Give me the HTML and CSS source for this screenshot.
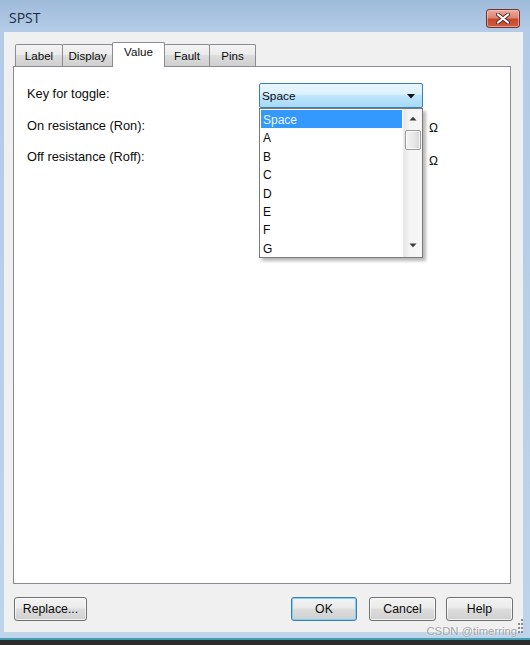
FILE: index.html
```html
<!DOCTYPE html>
<html>
<head>
<meta charset="utf-8">
<title>SPST</title>
<link rel="stylesheet" href="styles.css">
</head>
<body>
<div class="window">
  <div class="titlebar">
    <span class="title">SPST</span>
    <div class="close">
      <svg width="14" height="11" viewBox="0 0 14 11">
        <path d="M2 1.5 L12 9.5 M12 1.5 L2 9.5" stroke="#5a2a24" stroke-width="4" stroke-linecap="round"/>
        <path d="M2 1.5 L12 9.5 M12 1.5 L2 9.5" stroke="#ffffff" stroke-width="2.2" stroke-linecap="round"/>
      </svg>
    </div>
  </div>
  <div class="client">
    <div class="tabs">
      <div class="tab t-label">Label</div>
      <div class="tab t-display">Display</div>
      <div class="tab t-value active">Value</div>
      <div class="tab t-fault">Fault</div>
      <div class="tab t-pins">Pins</div>
    </div>
    <div class="panel">
      <div class="row r1">
        <div class="lbl">Key for toggle:</div>
        <div class="field">
          <div class="combo">
            <span class="combo-text">Space</span>
            <svg class="combo-arrow" width="8" height="5" viewBox="0 0 8 5"><path d="M0 0 H8 L4 4.5 Z" fill="#111"/></svg>
          </div>
          <div class="dropdown">
            <div class="items">
              <div class="item sel">Space</div>
              <div class="item">A</div>
              <div class="item">B</div>
              <div class="item">C</div>
              <div class="item">D</div>
              <div class="item">E</div>
              <div class="item">F</div>
              <div class="item">G</div>
            </div>
            <div class="scroll">
              <svg class="sarrow up" width="8" height="5" viewBox="0 0 8 5"><path d="M0.5 4.5 H7.5 L4 0.8 Z" fill="#3a3a3a"/></svg>
              <div class="thumb"></div>
              <svg class="sarrow down" width="8" height="5" viewBox="0 0 8 5"><path d="M0.5 0.5 H7.5 L4 4.2 Z" fill="#3a3a3a"/></svg>
            </div>
          </div>
        </div>
      </div>
      <div class="row r2">
        <div class="lbl">On resistance (Ron):</div>
        <div class="field"></div>
        <div class="unit">Ω</div>
      </div>
      <div class="row r3">
        <div class="lbl">Off resistance (Roff):</div>
        <div class="field"></div>
        <div class="unit">Ω</div>
      </div>
    </div>
    <div class="buttons">
      <div class="btn b-replace">Replace...</div>
      <div class="spacer"></div>
      <div class="btn b-ok default">OK</div>
      <div class="btn b-cancel">Cancel</div>
      <div class="btn b-help">Help</div>
    </div>
  </div>
  <div class="frame-bottom"></div>
  <div class="edge-teal"></div>
  <div class="edge-dark"></div>
  <div class="watermark">CSDN @timerring</div>
  <svg class="grip" width="5" height="15" viewBox="0 0 5 15">
    <rect x="3" y="0" width="2" height="2" fill="#8a8a8a"/>
    <rect x="0" y="4" width="2" height="2" fill="#8a8a8a"/>
    <rect x="3" y="4" width="2" height="2" fill="#8a8a8a"/>
    <rect x="0" y="8" width="2" height="2" fill="#8a8a8a"/>
    <rect x="3" y="8" width="2" height="2" fill="#8a8a8a"/>
    <rect x="0" y="12" width="2" height="2" fill="#8a8a8a"/>
    <rect x="3" y="12" width="2" height="2" fill="#8a8a8a"/>
  </svg>
</div>
</body>
</html>
```

FILE: styles.css
```css
* { box-sizing: border-box; }

html, body {
  margin: 0;
  padding: 0;
  background: #bcd3ea;
}

.window {
  position: relative;
  width: 530px;
  height: 645px;
  display: flex;
  flex-direction: column;
  background: linear-gradient(to bottom, #9fbbda 0px, #b3cbe6 30px, #bed4eb 100%);
  font-family: "Liberation Sans", Arial, sans-serif;
  color: #0c0c0c;
  overflow: hidden;
}

.titlebar {
  height: 32px;
  display: flex;
  justify-content: space-between;
  align-items: flex-start;
  flex: none;
}

.title {
  font-family: "Open Sans", "Liberation Sans", sans-serif;
  font-size: 14px;
  line-height: 20px;
  margin-top: 8px;
  margin-left: 9px;
  color: #1b2b42;
}

.close {
  width: 34px;
  height: 19px;
  margin-top: 9px;
  margin-right: 10px;
  border: 1px solid #6b3630;
  border-radius: 3px;
  background: linear-gradient(to bottom, #eaa99d 0%, #dd8572 45%, #c8462f 55%, #cf5a3f 100%);
  box-shadow: inset 0 0 0 1px rgba(255, 210, 200, 0.55);
  display: flex;
  align-items: center;
  justify-content: center;
}

.client {
  flex: none;
  margin-left: 4px;
  width: 519px;
  height: 600px;
  background: #f0f0f0;
  padding: 10px 12px 0 9px;
  display: flex;
  flex-direction: column;
}

.tabs {
  display: flex;
  align-items: flex-end;
  height: 24px;
  padding-left: 2px;
  position: relative;
  z-index: 2;
}

.tab {
  height: 22px;
  border: 1px solid #898c95;
  border-bottom: none;
  border-radius: 2px 2px 0 0;
  background: linear-gradient(to bottom, #f3f3f3 0%, #ebebeb 45%, #dddddd 50%, #cfcfcf 100%);
  font-size: 11.6px;
  line-height: 20px;
  text-align: center;
  padding-top: 1px;
  margin-left: -1px;
}

.t-label { width: 48px; margin-left: 0; }
.t-display { width: 51px; }
.t-value { width: 53px; }
.t-fault { width: 46px; }
.t-pins { width: 47px; }

.tab.active {
  height: 25px;
  background: #ffffff;
  margin-bottom: -1px;
  position: relative;
  z-index: 3;
  padding-top: 0;
  line-height: 18px;
}

.panel {
  height: 518px;
  border: 1px solid #898c95;
  background: #ffffff;
  padding: 17px 0 0 13px;
  position: relative;
  z-index: 1;
}

.row {
  display: flex;
  align-items: flex-start;
}

.r1 { height: 24px; }
.r2 { height: 32px; }
.r3 { height: 35px; }

.lbl {
  width: 232px;
  font-size: 12.8px;
  line-height: 15px;
}

.r1 .lbl { padding-top: 2px; }
.r2 .lbl { padding-top: 10px; }
.r3 .lbl { padding-top: 9px; }

.field {
  width: 163px;
  position: relative;
}

.unit {
  margin-left: 7px;
  font-size: 12px;
  line-height: 15px;
}

.r2 .unit { padding-top: 13px; }
.r3 .unit { padding-top: 14px; }

.combo {
  width: 164px;
  height: 25px;
  margin-top: -1px;
  border: 1px solid #3c7fb1;
  border-radius: 2px;
  background: linear-gradient(to bottom, #eaf6fd 0%, #d9f0fc 45%, #bee6fd 50%, #a7d9f5 100%);
  display: flex;
  align-items: center;
  justify-content: space-between;
  padding: 0 7px 0 2px;
}

.combo-text {
  font-size: 11.8px;
  line-height: 15px;
  padding-top: 1px;
}

.combo-arrow { margin-top: 1px; }

.dropdown {
  position: absolute;
  top: 24px;
  left: 0;
  width: 164px;
  height: 150px;
  background: #ffffff;
  border: 1px solid #7a7a7a;
  box-shadow: 3px 3px 3px rgba(0, 0, 0, 0.28);
  display: flex;
  z-index: 10;
}

.items {
  width: 143px;
  padding: 1px;
}

.item {
  height: 18.4px;
  font-size: 12px;
  line-height: 18px;
  padding-left: 2px;
  padding-top: 1px;
}

.item.sel {
  background: #3399ff;
  color: #eaf3ff;
}

.scroll {
  flex: 1;
  position: relative;
  background: linear-gradient(to right, #e6e6e6 0%, #f4f4f4 30%, #f6f6f6 100%);
  border-left: 1px solid #ececec;
}

.sarrow {
  position: absolute;
  left: 5px;
}

.sarrow.up { top: 7px; }
.sarrow.down { top: 134px; }

.thumb {
  position: absolute;
  top: 21px;
  left: 1px;
  width: 16px;
  height: 20px;
  border: 1px solid #9b9b9b;
  border-radius: 2px;
  background: linear-gradient(to right, #f4f4f4 0%, #e8e8e8 50%, #d8d8d8 100%);
  box-shadow: inset 0 0 0 1px rgba(255, 255, 255, 0.8);
}

.buttons {
  display: flex;
  margin-top: 13px;
  height: 24px;
  padding-left: 1px;
}

.spacer { flex: 1; }

.btn {
  height: 24px;
  border: 1px solid #707070;
  border-radius: 3px;
  background: linear-gradient(to bottom, #f2f2f2 0%, #ebebeb 45%, #dddddd 50%, #cfcfcf 100%);
  box-shadow: inset 0 0 0 1px rgba(255, 255, 255, 0.7);
  font-size: 12.3px;
  line-height: 20px;
  text-align: center;
  padding-top: 1px;
}

.b-replace { width: 73px; }
.b-ok { width: 66px; }
.b-cancel { width: 67px; margin-left: 12px; }
.b-help { width: 67px; margin-left: 10px; margin-right: -2px; }

.btn.default {
  border-color: #3c7fb1;
  box-shadow: inset 0 0 0 1px #7fd0f2;
}

.frame-bottom {
  height: 6px;
  flex: none;
}

.edge-teal {
  height: 2px;
  flex: none;
  background: #3f9fb0;
}

.edge-dark {
  flex: 1;
  background: #2a2c2e;
}

.watermark {
  position: absolute;
  right: 13px;
  top: 624px;
  font-size: 11.3px;
  line-height: 14px;
  color: #a4a4a4;
  text-shadow: 0 0 2px #ffffff;
}

.grip {
  position: absolute;
  left: 518px;
  top: 619px;
}
```
